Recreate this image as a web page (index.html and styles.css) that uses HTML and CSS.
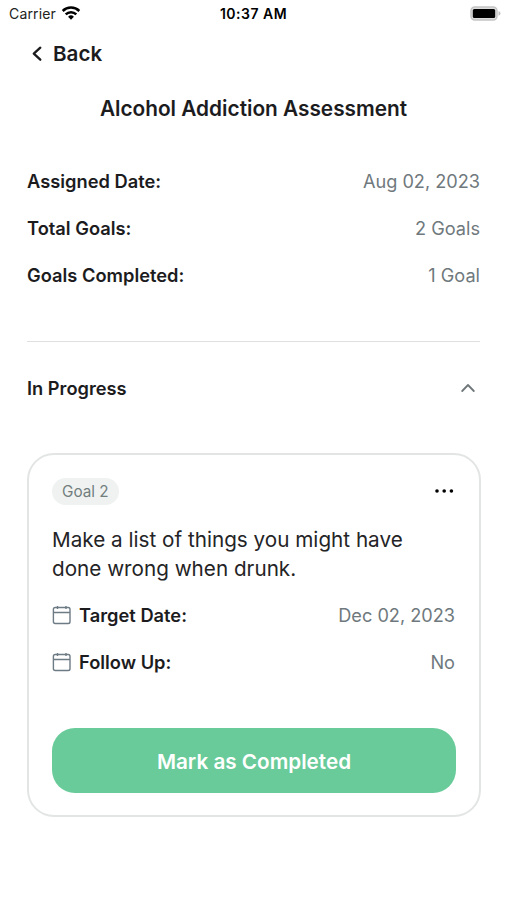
FILE: index.html
```html
<!DOCTYPE html>
<html lang="en">
<head>
<meta charset="utf-8">
<title>Alcohol Addiction Assessment</title>
<link rel="stylesheet" href="styles.css">
</head>
<body>
<header class="status">
  <div class="carrier"><span>Carrier</span>
    <svg width="20" height="14" viewBox="0 0 20 14"><g fill="none" stroke="#000" stroke-width="2.5"><path d="M1.7 5a11.8 11.8 0 0 1 16.6 0"/><path d="M4.7 8.4a7.5 7.5 0 0 1 10.6 0"/></g><path d="m10 13.8-2.9-3.1a4.2 4.2 0 0 1 5.8 0z"/></svg>
  </div>
  <div class="clock">10:37 AM</div>
  <div class="battery"><svg width="31" height="15" viewBox="0 0 31 15"><rect x="1" y="1" width="26" height="13" rx="3.8" fill="#ddd" stroke="#c4c4c4" stroke-width="1.5"/><rect x="2.8" y="2.9" width="22.4" height="9.2" rx="1.5"/><path d="M28.5 5.3c2.6.6 2.6 3.8 0 4.4z" fill="#bdbdbd"/></svg></div>
</header>
<nav class="back"><svg width="12" height="16" viewBox="0 0 12 16"><path d="M10.3 1.7 3.8 7.7l6.5 6" fill="none" stroke="#1c1c1e" stroke-width="2.3" stroke-linecap="round" stroke-linejoin="round"/></svg><span>Back</span></nav>
<main>
  <h1>Alcohol Addiction Assessment</h1>
  <dl class="summary">
    <div class="row"><dt>Assigned Date:</dt><dd>Aug 02, 2023</dd></div>
    <div class="row"><dt>Total Goals:</dt><dd>2 Goals</dd></div>
    <div class="row"><dt>Goals Completed:</dt><dd>1 Goal</dd></div>
  </dl>
  <div class="section"><h2>In Progress</h2><svg width="16" height="10" viewBox="0 0 16 10"><path d="m2.2 8 5.8-6 5.8 6" fill="none" stroke="#70777a" stroke-width="1.8" stroke-linecap="round" stroke-linejoin="round"/></svg></div>
  <article class="card">
    <div class="card-head"><span class="badge">Goal 2</span><svg width="20" height="6" viewBox="0 0 20 6"><circle cx="3" cy="3" r="1.8"/><circle cx="10.200" cy="3" r="1.8"/><circle cx="17.400" cy="3" r="1.8"/></svg></div>
    <p>Make a list of things you might have<br>done wrong when drunk.</p>
    <dl class="details">
      <div class="row"><dt><svg width="20" height="20" viewBox="0 0 20 20"><path d="M3.200 2.5h13q1.800 0 1.800 1.800v12.400q0 1.800-1.800 1.800h-13q-1.800 0-1.800-1.800V4.300q0-1.800 1.800-1.800zM1.400 7.500h16.600M5.500 1v3M14 1v3"/></svg><span>Target Date:</span></dt><dd>Dec 02, 2023</dd></div>
      <div class="row"><dt><svg width="20" height="20" viewBox="0 0 20 20"><path d="M3.200 2.5h13q1.800 0 1.800 1.800v12.400q0 1.800-1.800 1.800h-13q-1.800 0-1.800-1.800V4.300q0-1.800 1.800-1.800zM1.400 7.500h16.600M5.500 1v3M14 1v3"/></svg><span>Follow Up:</span></dt><dd>No</dd></div>
    </dl>
    <button type="button">Mark as Completed</button>
  </article>
</main>
</body>
</html>
```
FILE: styles.css
```css
* { box-sizing: border-box; }
body { margin: 0; background: #fff; color: #1c1c1e; font-family: Inter, "Liberation Sans", sans-serif; }
h1, h2, p, dl, dd { margin: 0; }
svg { display: block; flex: none; }
.status { display: grid; grid-template-columns: 1fr auto 1fr; align-items: center; height: 27px; padding: 0 6px 0 9px; color: #000; font-size: 14px; }
.carrier { display: flex; align-items: center; gap: 5px; color: #222; letter-spacing: .15px; }
.carrier svg { margin-top: -1px; }
.clock { margin-left: -3px; font-weight: 600; letter-spacing: .5px; }
.battery { display: flex; justify-content: flex-end; }
.back { display: flex; align-items: center; gap: 11px; height: 53px; padding-left: 30px; font-size: 20.6px; font-weight: 600; }
main { padding: 0 27px; }
h1 { height: 56px; line-height: 57px; text-align: center; font-size: 20.8px; font-weight: 600; white-space: nowrap; }
.summary { height: 206px; padding-top: 21px; border-bottom: 1px solid #dedfe0; }
.row { display: flex; align-items: center; justify-content: space-between; height: 47px; font-size: 18.15px; }
dt { display: flex; align-items: center; gap: 7px; font-size: 18.3px; font-weight: 600; }
dd { color: #6f797d; }
.section { display: flex; align-items: center; justify-content: space-between; height: 92px; padding-right: 4px; }
h2 { font-size: 18.25px; font-weight: 600; }
.card { height: 364px; margin: 19px -1px 0 0; padding: 22px 23px; border: 2px solid #e3e4e4; border-radius: 27px; }
.card-head { display: flex; align-items: center; justify-content: space-between; height: 28px; padding-right: 2px; }
.badge { display: flex; align-items: center; height: 27px; padding: 0 10px; border-radius: 14px; background: #eff2f1; color: #727e7e; font-size: 15.3px; }
.card p { margin-top: 20px; color: #242426; font-size: 20.7px; line-height: 29px; white-space: nowrap; }
.details { margin-top: 8px; padding-right: 1px; }
.details path { fill: none; stroke: #6d7b84; stroke-width: 1.4; }
button { display: block; width: 100%; height: 65px; margin-top: 43px; padding: 2px 0 0; border: 0; border-radius: 23px; background: #68cb99; color: #fff; font: 600 20.7px Inter, sans-serif; }
```
